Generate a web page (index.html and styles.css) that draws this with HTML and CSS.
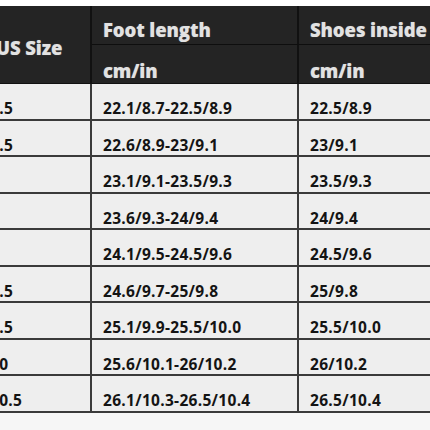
FILE: index.html
```html
<!DOCTYPE html>
<html>
<head>
<meta charset="utf-8">
<link rel="stylesheet" href="styles.css">
</head>
<body>
<div class="page">
  <div class="chart">
    <div class="h c1 span2">US Size</div>
    <div class="h c2 top">Foot length</div>
    <div class="h c3 top">Shoes inside</div>
    <div class="h c2 sub">cm/in</div>
    <div class="h c3 sub">cm/in</div>

    <div class="d c1">4.5</div><div class="d c2">22.1/8.7-22.5/8.9</div><div class="d c3">22.5/8.9</div>
    <div class="d c1">5.5</div><div class="d c2">22.6/8.9-23/9.1</div><div class="d c3">23/9.1</div>
    <div class="d c1">6</div><div class="d c2">23.1/9.1-23.5/9.3</div><div class="d c3">23.5/9.3</div>
    <div class="d c1">7</div><div class="d c2">23.6/9.3-24/9.4</div><div class="d c3">24/9.4</div>
    <div class="d c1">8</div><div class="d c2">24.1/9.5-24.5/9.6</div><div class="d c3">24.5/9.6</div>
    <div class="d c1">8.5</div><div class="d c2">24.6/9.7-25/9.8</div><div class="d c3">25/9.8</div>
    <div class="d c1">9.5</div><div class="d c2">25.1/9.9-25.5/10.0</div><div class="d c3">25.5/10.0</div>
    <div class="d c1">10</div><div class="d c2">25.6/10.1-26/10.2</div><div class="d c3">26/10.2</div>
    <div class="d c1">10.5</div><div class="d c2">26.1/10.3-26.5/10.4</div><div class="d c3">26.5/10.4</div>
  </div>
</div>
</body>
</html>
```
FILE: styles.css
```css
html, body {
  margin: 0;
  padding: 0;
  background: #f6f6f6;
}
.page {
  width: 430px;
  height: 430px;
  overflow: hidden;
  padding-top: 6px;
  box-sizing: border-box;
  background-image: linear-gradient(#ffffff 0 6px, #f6f6f6 6px);
}
.chart {
  margin-left: -30px;
  width: 500px;
  display: grid;
  grid-template-columns: 122px 207px 171px;
  grid-template-rows: 39px 39px repeat(9, 36.5px);
  font-family: "Open Sans", "DejaVu Sans", sans-serif;
  font-weight: bold;
}
.h {
  background: #242424;
  color: #e2e2e2;
  font-size: 18.5px;
  font-weight: 800;
  line-height: 20px;
  box-sizing: border-box;
  text-shadow: 0 0 1px rgba(255,255,255,0.3);
  white-space: nowrap;
  letter-spacing: -0.1px;
}
.c1 { padding-left: 20px; border-right: 2px solid #111; }
.c2 { padding-left: 11px; border-right: 2px solid #111; }
.c3 { padding-left: 11px; }
.span2 {
  grid-row: 1 / span 2;
  padding-top: 32px;
  padding-left: 26px;
  border-bottom: 1px solid #111;
}
.top {
  padding-top: 14px;
  border-bottom: 1px solid #0e0e0e;
}
.sub {
  padding-top: 16px;
  border-bottom: 1px solid #111;
}
.d {
  background: #eeeeee;
  color: #141414;
  font-size: 15.5px;
  letter-spacing: 0.3px;
  line-height: 18px;
  box-sizing: border-box;
  border-bottom: 2px solid #3a3a3a;
  padding-top: 15px;
  white-space: nowrap;
}
.d.c1, .d.c2 { border-right: 2px solid #3a3a3a; }
```
